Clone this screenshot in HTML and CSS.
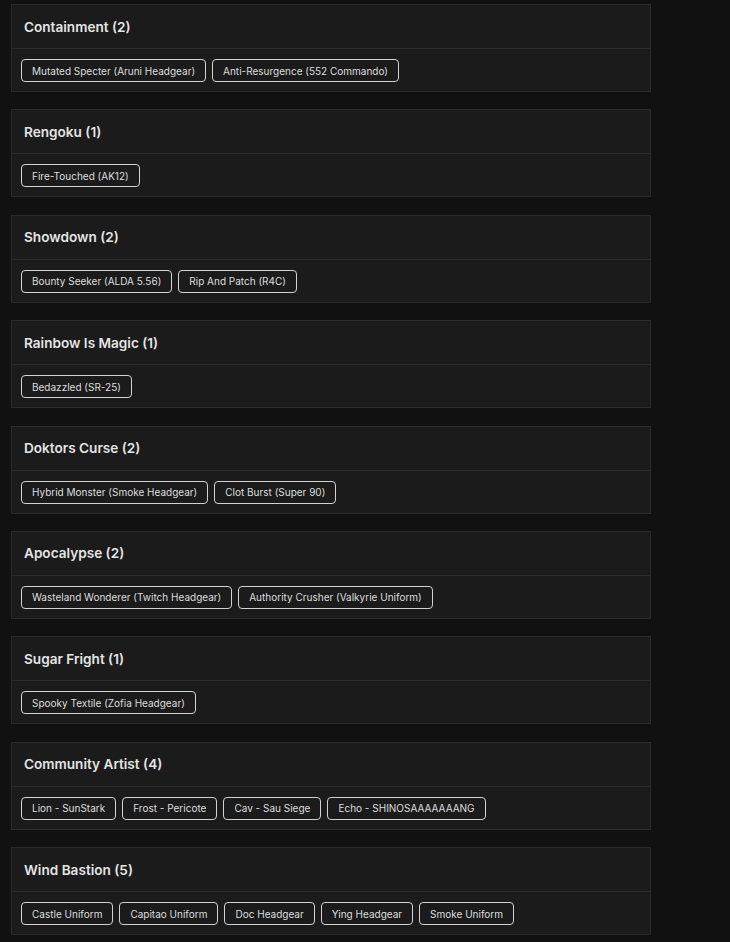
FILE: index.html
```html
<!DOCTYPE html>
<html>
<head>
<meta charset="utf-8">
<link rel="stylesheet" href="styles.css">
</head>
<body>
<div class="list">
  <section class="card">
    <div class="card-head">Containment (2)</div>
    <div class="card-body">
      <span class="chip">Mutated Specter (Aruni Headgear)</span>
      <span class="chip">Anti-Resurgence (552 Commando)</span>
    </div>
  </section>
  <section class="card">
    <div class="card-head">Rengoku (1)</div>
    <div class="card-body">
      <span class="chip">Fire-Touched (AK12)</span>
    </div>
  </section>
  <section class="card">
    <div class="card-head">Showdown (2)</div>
    <div class="card-body">
      <span class="chip">Bounty Seeker (ALDA 5.56)</span>
      <span class="chip">Rip And Patch (R4C)</span>
    </div>
  </section>
  <section class="card">
    <div class="card-head">Rainbow Is Magic (1)</div>
    <div class="card-body">
      <span class="chip">Bedazzled (SR-25)</span>
    </div>
  </section>
  <section class="card">
    <div class="card-head">Doktors Curse (2)</div>
    <div class="card-body">
      <span class="chip">Hybrid Monster (Smoke Headgear)</span>
      <span class="chip">Clot Burst (Super 90)</span>
    </div>
  </section>
  <section class="card">
    <div class="card-head">Apocalypse (2)</div>
    <div class="card-body">
      <span class="chip">Wasteland Wonderer (Twitch Headgear)</span>
      <span class="chip">Authority Crusher (Valkyrie Uniform)</span>
    </div>
  </section>
  <section class="card">
    <div class="card-head">Sugar Fright (1)</div>
    <div class="card-body">
      <span class="chip">Spooky Textile (Zofia Headgear)</span>
    </div>
  </section>
  <section class="card">
    <div class="card-head">Community Artist (4)</div>
    <div class="card-body">
      <span class="chip">Lion - SunStark</span>
      <span class="chip">Frost - Pericote</span>
      <span class="chip">Cav - Sau Siege</span>
      <span class="chip">Echo - SHINOSAAAAAAANG</span>
    </div>
  </section>
  <section class="card">
    <div class="card-head">Wind Bastion (5)</div>
    <div class="card-body">
      <span class="chip">Castle Uniform</span>
      <span class="chip">Capitao Uniform</span>
      <span class="chip">Doc Headgear</span>
      <span class="chip">Ying Headgear</span>
      <span class="chip">Smoke Uniform</span>
    </div>
  </section>
</div>
</body>
</html>
```
FILE: styles.css
```css
html, body {
  margin: 0;
  padding: 0;
  background: #111111;
}
body {
  font-family: "Inter", "Open Sans", "Liberation Sans", sans-serif;
  color: #e2e2e2;
}
.list {
  width: 640px;
  padding: 4px 0 0 11px;
  display: flex;
  flex-direction: column;
  gap: 17.375px;
}
.card {
  background: #1b1b1b;
  border: 1px solid #2b2b2b;
}
.card-head {
  height: 43px;
  display: flex;
  align-items: center;
  padding: 0 12px;
  border-bottom: 1px solid #2b2b2b;
  font-size: 13.6px;
  font-weight: 600;
  color: #e4e4e4;
}
.card-body {
  display: flex;
  flex-wrap: wrap;
  gap: 6px;
  padding: 10px 9px 9px;
}
.chip {
  height: 21px;
  display: inline-flex;
  align-items: center;
  padding: 0 10px;
  border: 1px solid #d2d2d2;
  border-radius: 4px;
  font-size: 10px;
  color: #dedede;
  white-space: nowrap;
}
```
